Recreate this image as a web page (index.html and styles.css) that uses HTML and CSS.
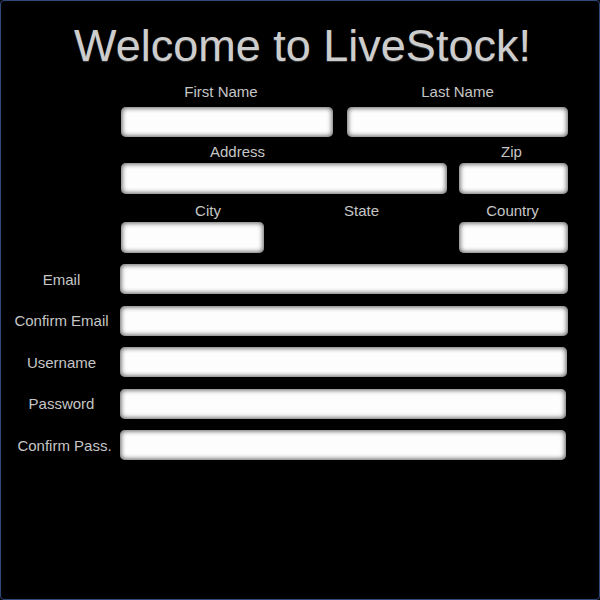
FILE: index.html
```html
<!DOCTYPE html>
<html>
<head>
<meta charset="utf-8">
<link rel="stylesheet" href="styles.css">
</head>
<body>
<div class="frame">
  <h1 class="title">Welcome to LiveStock!</h1>
  <div class="top">
    <div class="row row-1">
      <div class="field w-first">
        <div class="label lbl-first">First Name</div>
        <div class="input"></div>
      </div>
      <div class="field w-last">
        <div class="label lbl-last">Last Name</div>
        <div class="input"></div>
      </div>
    </div>
    <div class="row row-2">
      <div class="field w-address">
        <div class="label lbl-address">Address</div>
        <div class="input tall"></div>
      </div>
      <div class="field w-zip">
        <div class="label lbl-zip">Zip</div>
        <div class="input tall"></div>
      </div>
    </div>
    <div class="row row-3">
      <div class="field w-city">
        <div class="label lbl-city">City</div>
        <div class="input tall"></div>
      </div>
      <div class="field w-state">
        <div class="label">State</div>
      </div>
      <div class="field w-country">
        <div class="label lbl-country">Country</div>
        <div class="input tall"></div>
      </div>
    </div>
  </div>
  <div class="list">
    <div class="line"><div class="side">Email</div><div class="input grow"></div></div>
    <div class="line"><div class="side">Confirm Email</div><div class="input grow"></div></div>
    <div class="line"><div class="side">Username</div><div class="input grow r1"></div></div>
    <div class="line"><div class="side">Password</div><div class="input grow r2"></div></div>
    <div class="line"><div class="side side-pass">Confirm Pass.</div><div class="input grow r2"></div></div>
  </div>
</div>
</body>
</html>
```
FILE: styles.css
```css
html, body {
  margin: 0;
  padding: 0;
  background: #000;
}
.frame {
  box-sizing: border-box;
  width: 600px;
  height: 600px;
  border: 1px solid #2c4a7e;
  border-radius: 4px;
  background: #000;
  font-family: "Liberation Sans", Arial, sans-serif;
  color: #c6c6c6;
}
.title {
  margin: 19px 0 0 0;
  padding-left: 5px;
  font-size: 45px;
  line-height: 52px;
  font-weight: normal;
  text-align: center;
  color: #cdcdcd;
  text-shadow: 0 1px 1px #3a3a3a;
}
.top {
  margin: 11px 31px 0 120px;
  width: 447px;
}
.row {
  display: flex;
}
.row-1 { gap: 14px; }
.row-2 { gap: 12px; margin-top: 6px; }
.row-3 { margin-top: 8px; }
.field {
  display: flex;
  flex-direction: column;
}
.label {
  font-size: 15px;
  line-height: 18px;
  text-align: center;
  margin-bottom: 2px;
  white-space: nowrap;
}
.row-1 .label { margin-bottom: 6px; }
.lbl-first { padding-right: 12px; }
.lbl-last { padding-right: 0; }
.lbl-address { padding-right: 93px; }
.lbl-zip { padding-right: 4px; }
.lbl-city { padding-left: 31px; }
.lbl-country { padding-right: 2px; }
.w-first { width: 212px; }
.w-last { width: 221px; }
.w-address { width: 326px; }
.w-zip { width: 109px; }
.w-city { width: 143px; }
.w-state { width: 195px; }
.w-country { width: 109px; }
.input {
  height: 30px;
  background: #fdfdfd;
  border-radius: 5px;
  box-shadow: inset 0 0 5px 1px rgba(0, 0, 0, 0.65);
}
.input.tall { height: 31px; }
.list {
  margin: 11px 31px 0 0;
  display: flex;
  flex-direction: column;
  gap: 11.5px;
}
.line {
  display: flex;
  align-items: center;
}
.side {
  width: 119px;
  padding-left: 2px;
  box-sizing: border-box;
  text-align: center;
  font-size: 15px;
  white-space: nowrap;
}
.side-pass { padding-left: 8px; }
.grow {
  flex: 1;
}
.r1 { margin-right: 1px; }
.r2 { margin-right: 2px; }
```
